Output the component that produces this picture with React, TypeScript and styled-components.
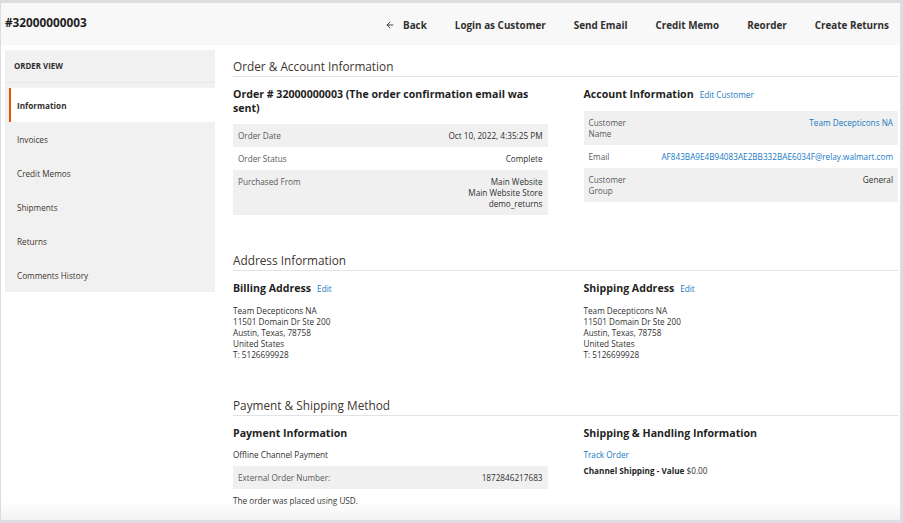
import React from "react";
import styled, { createGlobalStyle } from "styled-components";
import { ArrowLeft } from "lucide-react";

const Global = createGlobalStyle`
  html, body { margin: 0; padding: 0; background: #ffffff; }
  body { font-family: "Open Sans", "Liberation Sans", sans-serif; color: #303030; }
  * { box-sizing: border-box; }
`;

const Frame = styled.div`
  position: relative;
  width: 903px;
  height: 523px;
  overflow: hidden;
  border-style: solid;
  border-color: #dcdce1;
  border-width: 3px 3px 3px 1px;
  background: #ffffff;
  &::after {
    content: "";
    position: absolute;
    left: 0;
    right: 0;
    bottom: 0;
    height: 18px;
    background: linear-gradient(to bottom, rgba(244, 244, 246, 0), #f2f2f4);
    pointer-events: none;
  }
`;

const Header = styled.header`
  display: flex;
  align-items: center;
  justify-content: space-between;
  height: 42px;
  padding: 0 11px 0 4px;
  background: #f8f8f8;
`;

const PageTitle = styled.h1`
  margin: 0 0 5px;
  font-size: 11.8px;
  line-height: 16px;
  font-weight: 700;
  color: #1f1f1f;
`;

const Nav = styled.nav`
  display: flex;
  align-items: center;
  gap: 28px;
  margin-top: 2px;
`;

const NavButton = styled.button`
  display: flex;
  align-items: center;
  gap: 8px;
  padding: 0;
  border: 0;
  background: none;
  font-family: inherit;
  font-size: 9.9px;
  line-height: 16px;
  font-weight: 700;
  color: #303030;
  cursor: pointer;
`;

const Body = styled.div`
  display: flex;
  align-items: flex-start;
  padding: 5px 2px 0 4px;
`;

const Sidebar = styled.aside`
  width: 210px;
  flex: none;
  background: #f1f1f1;
`;

const SideHead = styled.div`
  height: 33px;
  padding-left: 9px;
  display: flex;
  align-items: center;
  font-size: 7.9px;
  font-weight: 700;
  text-transform: uppercase;
  color: #303030;
  border-bottom: 1px solid #e6e6e6;
`;

const SideList = styled.ul`
  list-style: none;
  margin: 0;
  padding: 5px 0 0 4px;
`;

const SideItem = styled.li<{ $active?: boolean }>`
  height: 34px;
  display: flex;
  align-items: center;
  padding-left: 6px;
  border-left: 2px solid ${(p) => (p.$active ? "#eb5202" : "transparent")};
  background: ${(p) => (p.$active ? "#ffffff" : "transparent")};
  font-size: 8.2px;
  font-weight: ${(p) => (p.$active ? 700 : 400)};
  color: ${(p) => (p.$active ? "#303030" : "#41362f")};
`;

const Main = styled.main`
  flex: 1;
  margin-left: 18px;
  padding-top: 7px;
`;

const Section = styled.section`
  & + & {
    margin-top: 36px;
  }
`;

const SectionTitle = styled.h2`
  margin: 0;
  font-size: 11.8px;
  line-height: 18px;
  font-weight: 400;
  color: #41362f;
  padding-bottom: 1px;
  border-bottom: 1px solid #e3e3e3;
`;

const Columns = styled.div`
  display: grid;
  grid-template-columns: 1fr 1fr;
  column-gap: 36px;
  align-items: start;
  padding-top: 11px;
`;

const Column = styled.div`
  min-width: 0;
`;

const BlockTitle = styled.h3`
  margin: 0 0 9px;
  font-size: 10.6px;
  line-height: 13.5px;
  font-weight: 700;
  color: #1f1f1f;
`;

const Link = styled.a`
  color: #1979c3;
  text-decoration: none;
  font-size: 8.2px;
  font-weight: 400;
  margin-left: 6px;
`;

const Table = styled.div`
  display: flex;
  flex-direction: column;
`;

const Row = styled.div<{ $labelWidth?: number }>`
  display: grid;
  grid-template-columns: ${(p) => (p.$labelWidth ? `${p.$labelWidth}px 1fr` : "1fr auto")};
  padding: 6px 5px;
  font-size: 8.2px;
  line-height: 11px;
  &:nth-child(odd) {
    background: #f0f0f0;
  }
`;

const Label = styled.div`
  color: #5a5a5a;
`;

const Value = styled.div<{ $link?: boolean }>`
  text-align: right;
  color: ${(p) => (p.$link ? "#1979c3" : "#303030")};
  white-space: nowrap;
`;

const Lines = styled.div`
  font-size: 8.2px;
  line-height: 11px;
  color: #303030;
`;

const Para = styled.p<{ $gap?: number }>`
  margin: ${(p) => p.$gap ?? 0}px 0 0;
  font-size: 8.2px;
  line-height: 11px;
  color: #303030;
`;

const PlainLink = styled.a`
  color: #1979c3;
  text-decoration: none;
`;

const Strong = styled.strong`
  font-weight: 700;
  color: #1f1f1f;
`;

const PayTable = styled(Table)`
  margin-top: 6px;
  margin-bottom: 6px;
`;

const navItems = ["Login as Customer", "Send Email", "Credit Memo", "Reorder", "Create Returns"];
const sideItems = ["Information", "Invoices", "Credit Memos", "Shipments", "Returns", "Comments History"];
const address = [
  "Team Decepticons NA",
  "11501 Domain Dr Ste 200",
  "Austin, Texas, 78758",
  "United States",
  "T: 5126699928",
];

export default function App() {
  return (
    <>
      <Global />
      <Frame>
        <Header>
          <PageTitle>#32000000003</PageTitle>
          <Nav>
            <NavButton>
              <ArrowLeft size={10} strokeWidth={2.2} />
              Back
            </NavButton>
            {navItems.map((n) => (
              <NavButton key={n}>{n}</NavButton>
            ))}
          </Nav>
        </Header>
        <Body>
          <Sidebar>
            <SideHead>Order View</SideHead>
            <SideList>
              {sideItems.map((s, i) => (
                <SideItem key={s} $active={i === 0}>
                  {s}
                </SideItem>
              ))}
            </SideList>
          </Sidebar>
          <Main>
            <Section>
              <SectionTitle>Order &amp; Account Information</SectionTitle>
              <Columns>
                <Column>
                  <BlockTitle>Order # 32000000003 (The order confirmation email was sent)</BlockTitle>
                  <Table>
                    <Row>
                      <Label>Order Date</Label>
                      <Value>Oct 10, 2022, 4:35:25 PM</Value>
                    </Row>
                    <Row>
                      <Label>Order Status</Label>
                      <Value>Complete</Value>
                    </Row>
                    <Row>
                      <Label>Purchased From</Label>
                      <Value>
                        Main Website
                        <br />
                        Main Website Store
                        <br />
                        demo_returns
                      </Value>
                    </Row>
                  </Table>
                </Column>
                <Column>
                  <BlockTitle>
                    Account Information<Link href="#">Edit Customer</Link>
                  </BlockTitle>
                  <Table>
                    <Row $labelWidth={52}>
                      <Label>Customer Name</Label>
                      <Value $link>Team Decepticons NA</Value>
                    </Row>
                    <Row $labelWidth={52}>
                      <Label>Email</Label>
                      <Value $link>AF843BA9E4B94083AE2BB332BAE6034F@relay.walmart.com</Value>
                    </Row>
                    <Row $labelWidth={52}>
                      <Label>Customer Group</Label>
                      <Value>General</Value>
                    </Row>
                  </Table>
                </Column>
              </Columns>
            </Section>
            <Section>
              <SectionTitle>Address Information</SectionTitle>
              <Columns>
                <Column>
                  <BlockTitle>
                    Billing Address<Link href="#">Edit</Link>
                  </BlockTitle>
                  <Lines>
                    {address.map((a) => (
                      <div key={a}>{a}</div>
                    ))}
                  </Lines>
                </Column>
                <Column>
                  <BlockTitle>
                    Shipping Address<Link href="#">Edit</Link>
                  </BlockTitle>
                  <Lines>
                    {address.map((a) => (
                      <div key={a}>{a}</div>
                    ))}
                  </Lines>
                </Column>
              </Columns>
            </Section>
            <Section>
              <SectionTitle>Payment &amp; Shipping Method</SectionTitle>
              <Columns>
                <Column>
                  <BlockTitle>Payment Information</BlockTitle>
                  <Para>Offline Channel Payment</Para>
                  <PayTable>
                    <Row>
                      <Label>External Order Number:</Label>
                      <Value>1872846217683</Value>
                    </Row>
                  </PayTable>
                  <Para>The order was placed using USD.</Para>
                </Column>
                <Column>
                  <BlockTitle>Shipping &amp; Handling Information</BlockTitle>
                  <Para>
                    <PlainLink href="#">Track Order</PlainLink>
                  </Para>
                  <Para $gap={5}>
                    <Strong>Channel Shipping - Value</Strong> $0.00
                  </Para>
                </Column>
              </Columns>
            </Section>
          </Main>
        </Body>
      </Frame>
    </>
  );
}
